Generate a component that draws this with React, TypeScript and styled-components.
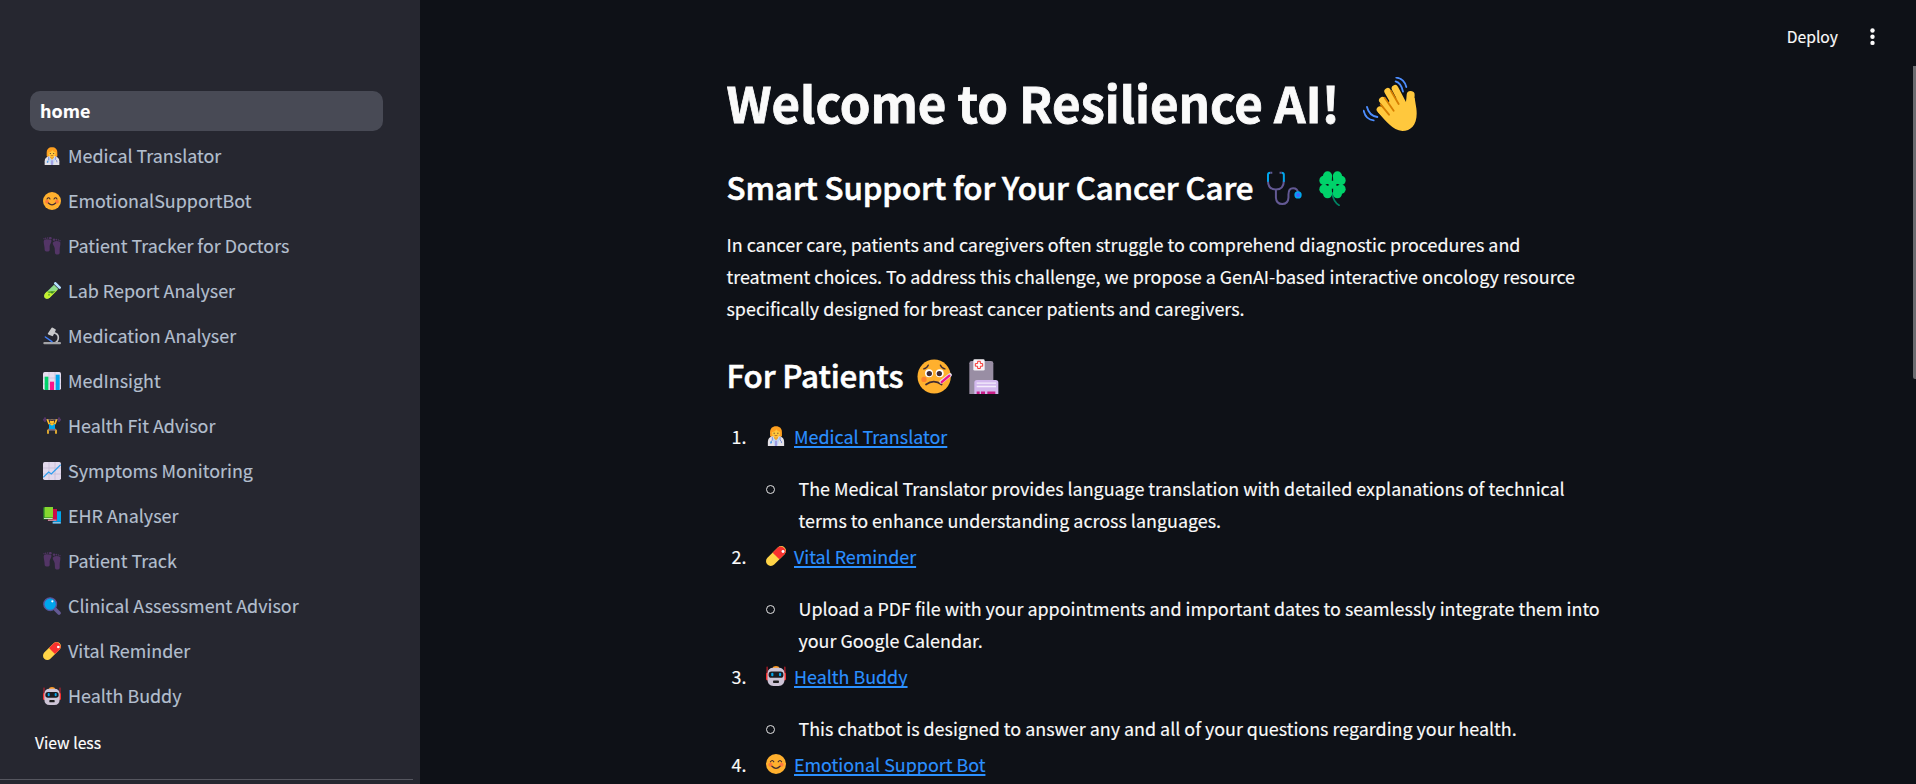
import React from "react";
import styled, { createGlobalStyle } from "styled-components";

const GlobalStyle = createGlobalStyle`
  *, *::before, *::after { box-sizing: border-box; }
  body {
    margin: 0;
    background: #0e1117;
    color: #fafafa;
    font-family: "Noto Sans CJK SC", "Noto Sans", sans-serif;
    font-size: 17.9px;
    -webkit-text-stroke: 0.15px currentColor;
  }
  h1, h2, p, ol, ul { margin: 0; padding: 0; }
  ol, ul { list-style: none; }
`;

/* ---------- emoji drawings ---------- */

type IconName =
  | "doctor" | "smile" | "feet" | "tube" | "microscope" | "bars" | "lifter"
  | "trend" | "books" | "lens" | "pill" | "robot" | "wave" | "stethoscope"
  | "clover" | "sick" | "hospital";

const drawings: Record<IconName, { box: string; art: React.ReactNode }> = {
  doctor: {
    box: "0 0 54 54",
    art: (
      <>
        <path d="M11 27V17C11 7 17 1 27 1s16 6 16 16v10l-5 5H16z" fill="#ffa01f" />
        <path d="M5 54V43c0-9 5-13 12-15h20c7 2 12 6 12 15v11z" fill="#e4e2e8" />
        <path d="M21 26h12v7l-6 6-6-6z" fill="#f0a52b" />
        <path d="M16 17c6-1 10-4 12-8 2 4 6 6 10 7v3c0 7-5 12-11 12s-11-5-11-12z" fill="#ffc83d" />
        <path d="M22 18v3M32 18v3" stroke="#5a3b32" strokeWidth="3" />
        <path d="M23 25q4 3 8 0" stroke="#a8501f" strokeWidth="2" fill="none" />
        <path d="M20 31l7 9 7-9 3 2-6 21h-8l-6-21z" fill="#bcd3f5" />
        <path d="M27 40v14" stroke="#8c6fd1" strokeWidth="3" />
        <path d="M17 29v10q-5 2-4 9M38 29v9q4 2 4 8" stroke="#6a7fd8" strokeWidth="2.4" fill="none" />
        <circle cx="14" cy="44" r="2.600" fill="#4aa3ea" />
      </>
    ),
  },
  smile: {
    box: "0 0 54 54",
    art: (
      <>
        <circle cx="27" cy="27" r="27" fill="#ffb02e" />
        <circle cx="12" cy="29" r="5.6" fill="#ff7a3d" />
        <circle cx="42" cy="29" r="5.6" fill="#ff7a3d" />
        <path d="M12 21q5-7 9 0M33 21q5-7 9 0M16 33q11 11 22 0" fill="none" stroke="#402a32" strokeWidth="3.2" strokeLinecap="round" />
      </>
    ),
  },
  feet: {
    box: "0 0 54 54",
    art: (
      <g fill="#533566">
        <path d="M2 13q0-6 8-6t15 2c2 6-4 12-5 18v12c0 6-14 6-15 0C5 28 2 22 2 13z" />
        <path d="M29 17q3-5 11-5t12 4c1 8-2 14-2 22v10c-1 6-13 6-14 0l-1-14c-1-7-6-11-6-17z" />
        <circle cx="3" cy="5" r="2" /><circle cx="8" cy="4" r="2.2" /><circle cx="14" cy="3" r="2.4" /><circle cx="22" cy="3.5" r="4" />
        <circle cx="33" cy="8" r="3.6" /><circle cx="40" cy="8" r="2.4" /><circle cx="46" cy="9" r="2.2" /><circle cx="51" cy="11" r="2" />
      </g>
    ),
  },
  tube: {
    box: "0 0 54 54",
    art: (
      <>
        <path d="M33 8L46 21 20 47Q12 53 6 48 1 42 7 34z" fill="#8fdc8c" />
        <path d="M11 29L36 26 43 24 20 47Q12 53 6 48 1 42 7 34z" fill="#c5f02e" />
        <path d="M12 29l14-2 12 1-8 6-12-1z" fill="#58a82b" />
        <circle cx="18" cy="38" r="3" fill="#6fb52a" /><circle cx="27" cy="32" r="2.4" fill="#35802f" />
        <path d="M37 4L50 17" stroke="#b5e0ff" strokeWidth="8" strokeLinecap="round" />
      </>
    ),
  },
  microscope: {
    box: "0 0 54 54",
    art: (
      <>
        <path d="M30 17q17 3 16 16-1 12-13 15" fill="none" stroke="#c4c4c6" strokeWidth="5" />
        <rect x="1" y="45" width="53" height="7" rx="3" fill="#a3a3a6" />
        <path d="M28 4L36 9 28 25 17 20z" fill="#c9c9cb" stroke="#c9c9cb" strokeWidth="5" strokeLinejoin="round" />
        <path d="M7 30L27 44" stroke="#3f7df6" strokeWidth="4.5" strokeLinecap="round" />
      </>
    ),
  },
  bars: {
    box: "0 0 54 54",
    art: (
      <>
        <rect width="54" height="54" rx="5" fill="#e6ddef" />
        <path d="M0 18h54M0 36h54M18 0v54M36 0v54" stroke="#cdbfda" strokeWidth="2.5" />
        <path d="M5 14h11v40H5z" fill="#00d26a" />
        <path d="M21 29h12v25H21z" fill="#f8128c" />
        <path d="M38 8h12v46H38z" fill="#00a6ed" />
      </>
    ),
  },
  lifter: {
    box: "0 0 54 54",
    art: (
      <>
        <path d="M3 8h48" stroke="#7b6f85" strokeWidth="2.4" />
        <rect x="3" y="1" width="6" height="14" rx="2" fill="#533566" /><rect x="45" y="1" width="6" height="14" rx="2" fill="#533566" />
        <circle cx="2" cy="8" r="3" fill="#533566" /><circle cx="52" cy="8" r="3" fill="#533566" />
        <path d="M13 7l5 13 9 4 9-4 5-13M20 36l-5 4v10M34 36l5 4v10" fill="none" stroke="#ffc02e" strokeWidth="5" strokeLinejoin="round" />
        <circle cx="27" cy="14" r="6.5" fill="#ffc02e" /><path d="M20 12q7-8 14 0z" fill="#4b3140" />
        <path d="M18 20q9 5 18 0v18H18z" fill="#00a6ed" />
        <path d="M16 36h22v5H16z" fill="#7a6a86" />
        <circle cx="27" cy="22" r="3.5" fill="#ffc02e" />
      </>
    ),
  },
  trend: {
    box: "0 0 54 54",
    art: (
      <>
        <rect width="54" height="54" rx="5" fill="#e2d9ec" />
        <path d="M0 18h54M0 36h54M18 0v54M36 0v54" stroke="#c8bcd6" strokeWidth="2.5" />
        <path d="M1 46L17 30l8 6L53 8" fill="none" stroke="#2d9ded" strokeWidth="3.6" />
      </>
    ),
  },
  books: {
    box: "0 0 54 54",
    art: (
      <>
        <path d="M29 14h25v36H29z" fill="#0074ba" /><path d="M33 13h21v31H33z" fill="#00a6ed" /><path d="M29 46h24v3H29z" fill="#d9e6ee" />
        <path d="M14 7h28v35H14z" fill="#990838" /><path d="M17 6h25v32H17z" fill="#ca0b4a" /><path d="M15 38h26v3H15z" fill="#d7c5cd" />
        <path d="M1 1h28v36H1z" fill="#2f8f2c" /><path d="M5 0h25v31H5z" fill="#86d72f" /><path d="M3 33h26v3H3z" fill="#cfe0c2" />
      </>
    ),
  },
  lens: {
    box: "0 0 54 54",
    art: (
      <>
        <path d="M36 36l12 12" stroke="#635994" strokeWidth="11" strokeLinecap="round" />
        <circle cx="21.5" cy="21.5" r="19" fill="#00a6ed" stroke="#58549a" strokeWidth="4" />
        <circle cx="28" cy="13" r="3.4" fill="#fff" />
      </>
    ),
  },
  pill: {
    box: "0 0 54 54",
    art: (
      <>
        <path d="M13 41L41 13" stroke="#ffd447" strokeWidth="26" strokeLinecap="round" />
        <path d="M18 18L31.800 4.200A13 13 0 0 1 50 22.400L36 36z" fill="#f8312f" />
        <circle cx="46" cy="15" r="4" fill="#fff" />
      </>
    ),
  },
  robot: {
    box: "0 0 54 54",
    art: (
      <>
        <path d="M3 3v20M51 3v20" stroke="#d3202c" strokeWidth="3" strokeLinecap="round" />
        <rect x="0" y="18" width="8" height="21" rx="4" fill="#f8312f" /><rect x="46" y="18" width="8" height="21" rx="4" fill="#f8312f" />
        <path d="M17 6q2-6 10-6t10 6z" fill="#ff9a1f" />
        <path d="M4 20Q5 5 20 5h14q15 0 16 15v16q0 18-16 18H20Q4 54 4 36z" fill="#cdc4d6" />
        <rect x="7" y="15" width="40" height="17" rx="8" fill="#1b1a20" />
        <rect x="14" y="18" width="6" height="10" rx="3" fill="#00a6ed" /><rect x="35" y="18" width="6" height="10" rx="3" fill="#00a6ed" />
        <rect x="19" y="39" width="16" height="7" rx="2" fill="#1c1c1c" />
      </>
    ),
  },
  wave: {
    box: "9 21 162 162",
    art: (
      <>
        <g stroke="#ffc83d" strokeLinecap="round" fill="none">
          <path d="M152 75L148 125" strokeWidth="24" />
          <path d="M105 55L135 112" strokeWidth="20" />
          <path d="M83 64L116 122" strokeWidth="20" />
          <path d="M67 91L100 134" strokeWidth="20" />
          <path d="M60 119L92 150" strokeWidth="20" />
        </g>
        <path d="M90 92L122 80 138 100Q140 84 146 78L164 84 169 115C175 160 155 183 127 183 98 182 77 152 54 127z" fill="#ffc83d" />
        <path d="M93 63L116 102M74 83L101 122M62 103L87 134" stroke="#d67d00" strokeWidth="5.5" strokeLinecap="round" fill="none" />
        <path d="M109 23Q132 25 139 51M107 34Q124 39 129 65M11 122Q17 149 41 151M21 111Q27 137 52 141" fill="none" stroke="#4d8eff" strokeWidth="5.500" strokeLinecap="round" />
      </>
    ),
  },
  stethoscope: {
    box: "21 19 106 101",
    art: (
      <>
        <path d="M24 48Q24 74 48 74T72 48M48 74V98Q49 117 67 117T86 98V89Q86 70 100 70T115 84" fill="none" stroke="#635994" strokeWidth="6" />
        <path d="M24 51V30Q24 24 31 24M72 51V30Q72 24 65 24" fill="none" stroke="#00a6ed" strokeWidth="6" />
        <path d="M31 24h6M59 24h6" stroke="#635994" strokeWidth="6" />
        <circle cx="115" cy="90" r="11" fill="#00a6ed" /><circle cx="115" cy="90" r="6" fill="#4064ff" />
      </>
    ),
  },
  clover: {
    box: "177 15 82 104",
    art: (
      <>
        <path d="M217 80Q220 106 238 117" fill="none" stroke="#008463" strokeWidth="5" strokeLinecap="round" />
        <g fill="#00d26a">
          <path d="M216 54L182 52 192 32 203 17 216 28zM220 54L254 52 244 32 233 17 220 28zM216 58L182 60 192 80 203 95 216 84zM220 58L254 60 244 80 233 95 220 84z" />
          <circle cx="203" cy="30" r="14" /><circle cx="192" cy="43" r="14" />
          <circle cx="233" cy="30" r="14" /><circle cx="244" cy="43" r="14" />
          <circle cx="203" cy="82" r="14" /><circle cx="192" cy="69" r="14" />
          <circle cx="233" cy="82" r="14" /><circle cx="244" cy="69" r="14" />
          <circle cx="218" cy="56" r="12" />
        </g>
      </>
    ),
  },
  sick: {
    box: "36 28 105 103",
    art: (
      <>
        <circle cx="87.500" cy="79.500" r="50" fill="#ffb02e" />
        <circle cx="57" cy="88" r="8" fill="#ff822d" />
        <circle cx="72" cy="70" r="12" fill="#fff" /><circle cx="104" cy="70" r="12" fill="#fff" />
        <circle cx="73" cy="71" r="8" fill="#402a32" /><circle cx="103" cy="71" r="8" fill="#402a32" />
        <path d="M56 57Q65 56 70 46M120 57Q111 56 106 46" fill="none" stroke="#402a32" strokeWidth="3.600" strokeLinecap="round" />
        <path d="M63 103Q86 86 110 103" fill="none" stroke="#402a32" strokeWidth="5" strokeLinecap="round" />
        <path d="M109 95L135 75" stroke="#e6e0ea" strokeWidth="11" strokeLinecap="round" />
        <path d="M110 96L133 77" stroke="#f0148c" strokeWidth="7" strokeLinecap="round" />
      </>
    ),
  },
  hospital: {
    box: "191 23 90 107",
    art: (
      <>
        <path d="M192 130V36q0-7 7-7h58q7 0 7 7v94z" fill="#998ea4" />
        <rect x="204" y="24" width="34" height="34" rx="4" fill="#f6f3f8" />
        <path d="M217 30h8v7h7v8h-7v7h-8v-7h-7v-8h7z" fill="#fff" stroke="#f8312f" strokeWidth="3" />
        <path d="M207 130V95q0-8 8-8h56q8 0 8 8v35z" fill="#d3b9ee" />
        <path d="M214 97h58M214 107h58" stroke="#f5eefc" strokeWidth="4" />
        <path d="M214 122h9v8h-9zM227 122h12v8h-12zM246 122h24v8h-24z" fill="#c81e86" />
      </>
    ),
  },
};

const EmojiSvg = styled.svg<{ $w: number; $h: number }>`
  display: block;
  flex: none;
  width: ${(p) => p.$w}px;
  height: ${(p) => p.$h}px;
`;

const Emoji = ({ name, w, h = w }: { name: IconName; w: number; h?: number }) => (
  <EmojiSvg viewBox={drawings[name].box} $w={w} $h={h} preserveAspectRatio="none" aria-hidden>
    {drawings[name].art}
  </EmojiSvg>
);

/* ---------- layout ---------- */

const Shell = styled.div`
  display: flex;
  height: 784px;
  overflow: hidden;
`;

const Sidebar = styled.aside`
  flex: none;
  display: flex;
  flex-direction: column;
  width: 420px;
  padding-top: 91px;
  background: #262730;
`;

const Nav = styled.nav`
  display: flex;
  flex-direction: column;
  gap: 5px;
  width: 353px;
  margin-left: 30px;
`;

const NavLink = styled.a<{ $active?: boolean }>`
  display: flex;
  align-items: center;
  gap: 7px;
  height: 40px;
  padding-left: ${(p) => (p.$active ? 10 : 13)}px;
  border-radius: 10px;
  background: ${(p) => (p.$active ? "#484a55" : "transparent")};
  color: ${(p) => (p.$active ? "#fff" : "#b3bfce")};
  font-weight: ${(p) => (p.$active ? 700 : 400)};
  line-height: 38px;
`;

const NavText = styled.span`
  height: 40px;
  white-space: nowrap;
`;

const NavIcon = styled.span`
  padding-bottom: 1px;
`;

const ViewLess = styled.button`
  align-self: flex-start;
  height: 28px;
  margin: 13px 0 0 35px;
  padding: 0;
  border: 0;
  background: none;
  color: #fff;
  font: inherit;
  font-size: 15.7px;
  line-height: 28px;
`;

const SideDivider = styled.hr`
  width: 413px;
  height: 1px;
  margin: 22px 0 0;
  border: 0;
  background: #55565f;
`;

const Main = styled.main`
  position: relative;
  flex: 1;
  display: flex;
  flex-direction: column;
  min-width: 0;
`;

const Header = styled.header`
  display: flex;
  flex: none;
  justify-content: flex-end;
  align-items: center;
  gap: 32px;
  height: 69px;
  padding: 4px 41px 0 0;
  font-size: 15.7px;
`;

const DeployButton = styled.button`
  height: 68px;
  padding: 0;
  border: 0;
  background: none;
  color: #fafafa;
  font: inherit;
  line-height: 66px;
`;

const MenuDots = styled.svg`
  display: block;
  width: 5px;
  height: 18px;
`;

const ScrollThumb = styled.div`
  position: absolute;
  top: 66px;
  right: 0;
  width: 3px;
  height: 313px;
  border-radius: 0 0 0 2px;
  background: #6b6c70;
`;

const Content = styled.div`
  width: 882px;
  margin-left: 306.5px;
`;

const Title = styled.h1`
  display: flex;
  gap: 23px;
  height: 66px;
  font-size: 49.2px;
  font-weight: 700;
  line-height: 66px;
  letter-spacing: -0.06px;
  -webkit-text-stroke: 0.8px #fafafa;
`;

const TitleIcon = styled.span`
  padding-top: 8px;
`;

const Heading = styled.h2<{ $top: number }>`
  display: flex;
  gap: 13.5px;
  height: 42px;
  margin-top: ${(p) => p.$top}px;
  color: #fff;
  font-size: 31.3px;
  font-weight: 500;
  line-height: 42px;
  letter-spacing: -0.12px;
  -webkit-text-stroke: 0.6px #fff;
`;

const HeadingIcons = styled.span<{ $gap: number; $top: number }>`
  display: flex;
  gap: ${(p) => p.$gap}px;
  padding-top: ${(p) => p.$top}px;
`;

const Paragraph = styled.p`
  margin-top: 20px;
  line-height: 32px;
`;

const Features = styled.ol`
  display: flex;
  flex-direction: column;
  gap: 4px;
  margin-top: 24px;
  line-height: 32px;
`;

const Feature = styled.li`
  display: grid;
  grid-template-columns: 39.5px 1fr;
  row-gap: 20px;
`;

const Marker = styled.span`
  padding-left: 5px;
`;

const FeatureTitle = styled.div`
  display: flex;
  align-items: center;
  gap: 8px;
  height: 32px;
`;

const FeatureLink = styled.a`
  color: #2b90ff;
  text-decoration: underline;
  text-decoration-thickness: 2px;
  text-underline-offset: 2px;
  text-decoration-skip-ink: none;
`;

const Detail = styled.div`
  grid-column: 2;
  display: flex;
`;

const Circle = styled.span`
  flex: none;
  width: 9px;
  height: 9px;
  margin: 13px 23.5px 0 0;
  border: 1px solid #e4e4e5;
  border-radius: 50%;
`;

/* ---------- content ---------- */

const pages: { icon: IconName; label: string }[] = [
  { icon: "doctor", label: "Medical Translator" },
  { icon: "smile", label: "EmotionalSupportBot" },
  { icon: "feet", label: "Patient Tracker for Doctors" },
  { icon: "tube", label: "Lab Report Analyser" },
  { icon: "microscope", label: "Medication Analyser" },
  { icon: "bars", label: "MedInsight" },
  { icon: "lifter", label: "Health Fit Advisor" },
  { icon: "trend", label: "Symptoms Monitoring" },
  { icon: "books", label: "EHR Analyser" },
  { icon: "feet", label: "Patient Track" },
  { icon: "lens", label: "Clinical Assessment Advisor" },
  { icon: "pill", label: "Vital Reminder" },
  { icon: "robot", label: "Health Buddy" },
];

const features: { icon: IconName; label: string; lines: string[] }[] = [
  {
    icon: "doctor",
    label: "Medical Translator",
    lines: [
      "The Medical Translator provides language translation with detailed explanations of technical",
      "terms to enhance understanding across languages.",
    ],
  },
  {
    icon: "pill",
    label: "Vital Reminder",
    lines: [
      "Upload a PDF file with your appointments and important dates to seamlessly integrate them into",
      "your Google Calendar.",
    ],
  },
  {
    icon: "robot",
    label: "Health Buddy",
    lines: ["This chatbot is designed to answer any and all of your questions regarding your health."],
  },
  { icon: "smile", label: "Emotional Support Bot", lines: [] },
];

const Lines = ({ lines }: { lines: string[] }) => (
  <>
    {lines.map((line, i) => (
      <React.Fragment key={line}>
        {i > 0 && <br />}
        {line}
      </React.Fragment>
    ))}
  </>
);

export default function App() {
  return (
    <Shell>
      <GlobalStyle />
      <Sidebar>
        <Nav>
          <NavLink $active>
            <NavText>home</NavText>
          </NavLink>
          {pages.map((page) => (
            <NavLink key={page.label}>
              <NavIcon>
                <Emoji name={page.icon} w={18} />
              </NavIcon>
              <NavText>{page.label}</NavText>
            </NavLink>
          ))}
        </Nav>
        <ViewLess>View less</ViewLess>
        <SideDivider />
      </Sidebar>
      <Main>
        <Header>
          <DeployButton>Deploy</DeployButton>
          <MenuDots viewBox="0 0 5 18">
            <g fill="#fafafa">
              <circle cx="2.5" cy="2.500" r="2.200" />
              <circle cx="2.5" cy="8.700" r="2.200" />
              <circle cx="2.5" cy="14.900" r="2.200" />
            </g>
          </MenuDots>
        </Header>
        <Content>
          <Title>
            Welcome to Resilience AI!
            <TitleIcon>
              <Emoji name="wave" w={54} />
            </TitleIcon>
          </Title>
          <Heading $top={31}>
            Smart Support for Your Cancer Care
            <HeadingIcons $gap={17} $top={5}>
              <Emoji name="stethoscope" w={35} h={34} />
              <Emoji name="clover" w={27} h={35} />
            </HeadingIcons>
          </Heading>
          <Paragraph>
            <Lines
              lines={[
                "In cancer care, patients and caregivers often struggle to comprehend diagnostic procedures and",
                "treatment choices. To address this challenge, we propose a GenAI-based interactive oncology resource",
                "specifically designed for breast cancer patients and caregivers.",
              ]}
            />
          </Paragraph>
          <Heading $top={30}>
            For Patients
            <HeadingIcons $gap={17} $top={5}>
              <Emoji name="sick" w={35} h={35} />
              <Emoji name="hospital" w={30} h={35} />
            </HeadingIcons>
          </Heading>
          <Features>
            {features.map((feature, i) => (
              <Feature key={feature.label}>
                <Marker>{i + 1}.</Marker>
                <FeatureTitle>
                  <Emoji name={feature.icon} w={20} />
                  <FeatureLink>{feature.label}</FeatureLink>
                </FeatureTitle>
                {feature.lines.length > 0 && (
                  <Detail>
                    <Circle />
                    <div>
                      <Lines lines={feature.lines} />
                    </div>
                  </Detail>
                )}
              </Feature>
            ))}
          </Features>
        </Content>
        <ScrollThumb />
      </Main>
    </Shell>
  );
}
